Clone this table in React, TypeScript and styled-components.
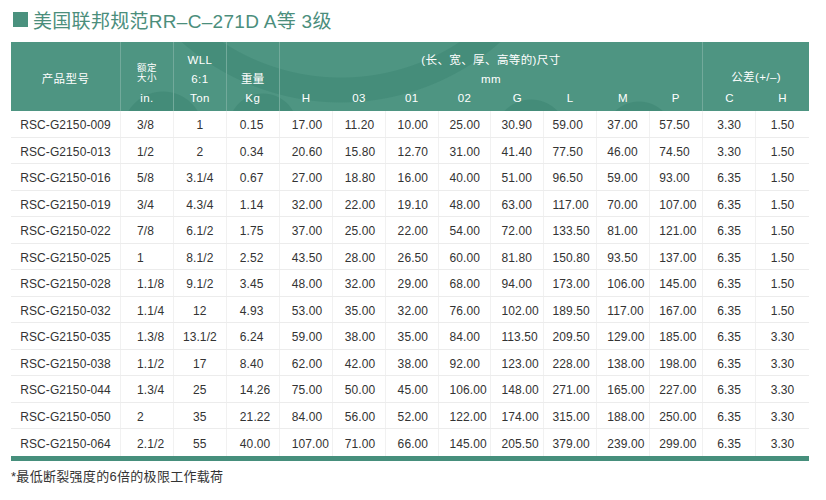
import React from 'react'
import styled, { createGlobalStyle } from 'styled-components'

const GlobalStyle = createGlobalStyle`
  html, body {
    margin: 0;
    padding: 0;
    background: #ffffff;
  }
  body {
    font-family: "Liberation Sans", "Noto Sans CJK SC", Arial, sans-serif;
    color: #333;
  }
`

const Page = styled.div`
  width: 826px;
  height: 500px;
  padding: 6px 0 0 11px;
  box-sizing: border-box;
  overflow: hidden;
`

const Title = styled.h1`
  display: flex;
  align-items: center;
  gap: 5px;
  margin: 0 0 0 2px;
  height: 26px;
  font-size: 19px;
  font-weight: normal;
  letter-spacing: 0.3px;
  color: #4b8e7c;
`

const Square = styled.span`
  display: inline-block;
  width: 15px;
  height: 15px;
  background: #4a917e;
`

const COLS = '110px repeat(13, 1fr)'

const Table = styled.div`
  width: 798px;
  margin-top: 10px;
`

const Head = styled.div`
  display: grid;
  grid-template-columns: ${COLS};
  height: 69px;
  color: #fff;
  background-color: #4e9582;
  background-image:
    radial-gradient(circle at 152px 90px, #448c79 0 40px, transparent 41px),
    radial-gradient(circle at 252px 86px, #448c79 0 34px, transparent 35px),
    radial-gradient(circle at 520px 94px, #448c79 0 36px, transparent 37px),
    radial-gradient(circle at 628px 94px, #448c79 0 34px, transparent 35px),
    radial-gradient(circle at 330px -180px, transparent 0 215px, #458d7a 216px 240px, transparent 241px);
`

const Group = styled.div<{ $span: string; $divider?: boolean; $cols?: number }>`
  grid-column: ${(p) => p.$span};
  display: grid;
  grid-template-columns: repeat(${(p) => p.$cols ?? 1}, 1fr);
  grid-template-rows: 28px 19px 22px;
  border-right: ${(p) => (p.$divider ? '1px solid #72aa9b' : 'none')};
`

const HeadText = styled.div<{ $row: string; $col?: string; $align?: string; $size?: number; $mb?: number }>`
  grid-row: ${(p) => p.$row};
  grid-column: ${(p) => p.$col ?? '1 / -1'};
  align-self: ${(p) => p.$align ?? 'center'};
  margin-bottom: ${(p) => p.$mb ?? 0}px;
  text-align: center;
  font-size: ${(p) => p.$size ?? 11.5}px;
  line-height: ${(p) => (p.$size && p.$size < 11 ? 10 : 19)}px;
  letter-spacing: 0.4px;
  white-space: nowrap;
`

const Body = styled.div`
  border-bottom: 5px solid #468f7c;
`

const Row = styled.div`
  display: grid;
  grid-template-columns: ${COLS};
  height: 26.5px;
  border-bottom: 1px solid #ececec;
  box-sizing: border-box;
  &:last-child {
    border-bottom: none;
  }
`

const Cell = styled.div<{ $pad?: number }>`
  display: flex;
  align-items: center;
  justify-content: ${(p) => (p.$pad === undefined ? 'center' : 'flex-start')};
  padding: 3px 0 0 ${(p) => p.$pad ?? 0}px;
  border-right: 1px solid #f1f1f1;
  font-size: 12px;
  letter-spacing: 0.1px;
  color: #333;
  white-space: nowrap;
  &:last-child {
    border-right: none;
  }
`

const Note = styled.p`
  margin: 5px 0 0;
  font-size: 13px;
  letter-spacing: 0.3px;
  color: #333;
`

// left padding per column, undefined = centred
const pads: (number | undefined)[] = [undefined, 16, undefined, 13, 12, 12, 12, 11, 10, 8, 10, 9, undefined, undefined]

const rows: string[][] = [
  ['RSC-G2150-009', '3/8', '1', '0.15', '17.00', '11.20', '10.00', '25.00', '30.90', '59.00', '37.00', '57.50', '3.30', '1.50'],
  ['RSC-G2150-013', '1/2', '2', '0.34', '20.60', '15.80', '12.70', '31.00', '41.40', '77.50', '46.00', '74.50', '3.30', '1.50'],
  ['RSC-G2150-016', '5/8', '3.1/4', '0.67', '27.00', '18.80', '16.00', '40.00', '51.00', '96.50', '59.00', '93.00', '6.35', '1.50'],
  ['RSC-G2150-019', '3/4', '4.3/4', '1.14', '32.00', '22.00', '19.10', '48.00', '63.00', '117.00', '70.00', '107.00', '6.35', '1.50'],
  ['RSC-G2150-022', '7/8', '6.1/2', '1.75', '37.00', '25.00', '22.00', '54.00', '72.00', '133.50', '81.00', '121.00', '6.35', '1.50'],
  ['RSC-G2150-025', '1', '8.1/2', '2.52', '43.50', '28.00', '26.50', '60.00', '81.80', '150.80', '93.50', '137.00', '6.35', '1.50'],
  ['RSC-G2150-028', '1.1/8', '9.1/2', '3.45', '48.00', '32.00', '29.00', '68.00', '94.00', '173.00', '106.00', '145.00', '6.35', '1.50'],
  ['RSC-G2150-032', '1.1/4', '12', '4.93', '53.00', '35.00', '32.00', '76.00', '102.00', '189.50', '117.00', '167.00', '6.35', '1.50'],
  ['RSC-G2150-035', '1.3/8', '13.1/2', '6.24', '59.00', '38.00', '35.00', '84.00', '113.50', '209.50', '129.00', '185.00', '6.35', '3.30'],
  ['RSC-G2150-038', '1.1/2', '17', '8.40', '62.00', '42.00', '38.00', '92.00', '123.00', '228.00', '138.00', '198.00', '6.35', '3.30'],
  ['RSC-G2150-044', '1.3/4', '25', '14.26', '75.00', '50.00', '45.00', '106.00', '148.00', '271.00', '165.00', '227.00', '6.35', '3.30'],
  ['RSC-G2150-050', '2', '35', '21.22', '84.00', '56.00', '52.00', '122.00', '174.00', '315.00', '188.00', '250.00', '6.35', '3.30'],
  ['RSC-G2150-064', '2.1/2', '55', '40.00', '107.00', '71.00', '66.00', '145.00', '205.50', '379.00', '239.00', '299.00', '6.35', '3.30'],
]

const dims = ['H', '03', '01', '02', 'G', 'L', 'M', 'P']

export default function App() {
  return (
    <Page>
      <GlobalStyle />
      <Title>
        <Square />
        美国联邦规范RR–C–271D A等 3级
      </Title>
      <Table>
        <Head>
          <Group $span="1" $divider>
            <HeadText $row="2">产品型号</HeadText>
          </Group>
          <Group $span="2" $divider>
            <HeadText $row="1 / 3" $align="end" $size={9.5} $mb={6}>
              额定
              <br />
              大小
            </HeadText>
            <HeadText $row="3" $align="start">in.</HeadText>
          </Group>
          <Group $span="3" $divider>
            <HeadText $row="1" $align="end">WLL</HeadText>
            <HeadText $row="2">6:1</HeadText>
            <HeadText $row="3" $align="start">Ton</HeadText>
          </Group>
          <Group $span="4" $divider>
            <HeadText $row="2">重量</HeadText>
            <HeadText $row="3" $align="start">Kg</HeadText>
          </Group>
          <Group $span="5 / 13" $divider $cols={8}>
            <HeadText $row="1" $align="end">(长、宽、厚、高等的)尺寸</HeadText>
            <HeadText $row="2">mm</HeadText>
            {dims.map((d, i) => (
              <HeadText key={d} $row="3" $col={String(i + 1)} $align="start">
                {d}
              </HeadText>
            ))}
          </Group>
          <Group $span="13 / 15" $cols={2}>
            <HeadText $row="1 / 3" $align="end" $mb={2}>公差(+/–)</HeadText>
            <HeadText $row="3" $col="1" $align="start">C</HeadText>
            <HeadText $row="3" $col="2" $align="start">H</HeadText>
          </Group>
        </Head>
        <Body>
          {rows.map((r) => (
            <Row key={r[0]}>
              {r.map((v, i) => (
                <Cell key={i} $pad={pads[i]}>
                  {v}
                </Cell>
              ))}
            </Row>
          ))}
        </Body>
      </Table>
      <Note>*最低断裂强度的6倍的极限工作载荷</Note>
    </Page>
  )
}
